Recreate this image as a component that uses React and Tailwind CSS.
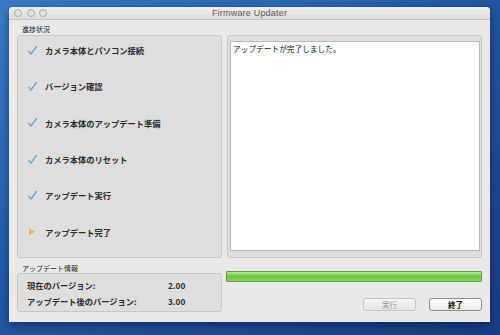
import React from "react";

const steps = [
  { label: "カメラ本体とパソコン接続", done: true },
  { label: "バージョン確認", done: true },
  { label: "カメラ本体のアップデート準備", done: true },
  { label: "カメラ本体のリセット", done: true },
  { label: "アップデート実行", done: true },
  { label: "アップデート完了", done: false },
];

const jp = { fontFamily: '"Noto Sans CJK JP", "Noto Sans", sans-serif' };

function Check() {
  return (
    <svg width="9" height="9" viewBox="0 0 9 9" className="shrink-0">
      <path
        d="M0.8 5.4 L2.9 8.2 L8.4 0.5"
        fill="none"
        stroke="#5ea6cc"
        strokeWidth="1.4"
        strokeLinecap="round"
        strokeLinejoin="round"
      />
    </svg>
  );
}

function Arrow() {
  return (
    <svg width="9" height="9" viewBox="0 0 9 9" className="shrink-0">
      <defs>
        <linearGradient id="arr" x1="0" y1="0" x2="0" y2="1">
          <stop offset="0" stopColor="#f7c27a" />
          <stop offset="1" stopColor="#ec9a35" />
        </linearGradient>
      </defs>
      <path d="M1 1 L7 4.5 L1 8 Z" fill="url(#arr)" />
    </svg>
  );
}

export default function App() {
  return (
    <div
      className="w-[500px] h-[335px] overflow-hidden bg-linear-to-br from-[#3a7cc4] via-[#2256a3] to-[#183c86] pt-[7px] pl-[9px]"
      style={jp}
    >
      {/* ウィンドウ */}
      <div className="w-[481px] h-[315px] bg-[#e9e9e9] rounded-t-[4px] shadow-[0_3px_10px_rgba(0,0,0,0.45)] flex flex-col">
        {/* タイトルバー */}
        <div className="h-[13px] relative flex items-center justify-center rounded-t-[4px] bg-linear-to-b from-[#efefef] to-[#dcdcdc] border-b border-[#c2c2c2]">
          <div className="absolute left-[5px] top-[2px] flex gap-[4.5px]">
            <span className="w-[8px] h-[8px] rounded-full bg-[#e2e2e2] border border-[#a9a9a9]" />
            <span className="w-[8px] h-[8px] rounded-full bg-[#e2e2e2] border border-[#a9a9a9]" />
            <span className="w-[8px] h-[8px] rounded-full bg-[#e2e2e2] border border-[#a9a9a9]" />
          </div>
          <span
            className="text-[9px] leading-none text-[#5a5a5a] tracking-[0.2px]"
            style={{ fontFamily: '"Liberation Sans", Arial, sans-serif' }}
          >
            Firmware Updater
          </span>
        </div>

        {/* 進捗状況 */}
        <div className="pl-[13px] pt-[4px] h-[15px] text-[7px] leading-[10px] text-[#222]">進捗状況</div>

        <div className="flex gap-[5px] px-[8px] h-[223px]">
          <div className="w-[205px] bg-[#dedede] border border-[#c6c6c6] rounded-[3px] flex flex-col gap-[6.4px] -mt-0 pt-0">
            {steps.map((s) => (
              <div key={s.label} className="h-[30px] flex items-center pl-[10px] -translate-y-[1px]">
                {s.done ? <Check /> : <Arrow />}
                <span className="ml-[8px] text-[8.25px] leading-none font-bold text-[#2a2a2a]">{s.label}</span>
              </div>
            ))}
          </div>

          <div className="w-[255px] bg-[#dedede] border border-[#c6c6c6] rounded-[3px] pt-[5px] pb-[6px] pl-[2px] pr-[1px] flex">
            <div className="flex-1 bg-white border border-[#b9b9b9] px-[2px] pt-[2px] text-[7.7px] leading-[10px] text-[#111]">
              アップデートが完了しました。
            </div>
          </div>
        </div>

        {/* 下段 */}
        <div className="flex gap-[5px] px-[8px]">
          <div className="w-[205px]">
            <div className="pl-[5px] pt-[5px] h-[15px] text-[7px] leading-[10px] text-[#222]">アップデート情報</div>
            <div className="h-[39px] bg-[#dedede] border border-[#c6c6c6] rounded-[3px] pt-[3px] pl-[9px] text-[8.25px] font-bold text-[#2a2a2a]">
              <div className="h-[16px] flex items-center">
                <span className="w-[141px]">現在のバージョン:</span>
                <span>2.00</span>
              </div>
              <div className="h-[16px] flex items-center">
                <span className="w-[141px]">アップデート後のバージョン:</span>
                <span>3.00</span>
              </div>
            </div>
          </div>

          <div className="w-[256px] pt-[13px] -ml-[1px]">
            <div className="h-[11px] rounded-[1px] border border-[#5d9e37] bg-linear-to-b from-[#b5e88c] via-[#6cc63a] to-[#86d456]" />
            <div className="flex justify-end gap-[13px] mt-[16px]">
              <button className="w-[53px] h-[13px] rounded-[3px] border border-[#c3c3c3] bg-linear-to-b from-[#f6f6f6] to-[#e4e4e4] text-[7.5px] leading-none text-[#9a9a9a]">
                実行
              </button>
              <button className="w-[53px] h-[13px] rounded-[3px] border border-[#8c8c8c] bg-linear-to-b from-[#ffffff] to-[#e8e8e8] text-[7.5px] leading-none font-bold text-[#111]">
                終了
              </button>
            </div>
          </div>
        </div>
      </div>
    </div>
  );
}
